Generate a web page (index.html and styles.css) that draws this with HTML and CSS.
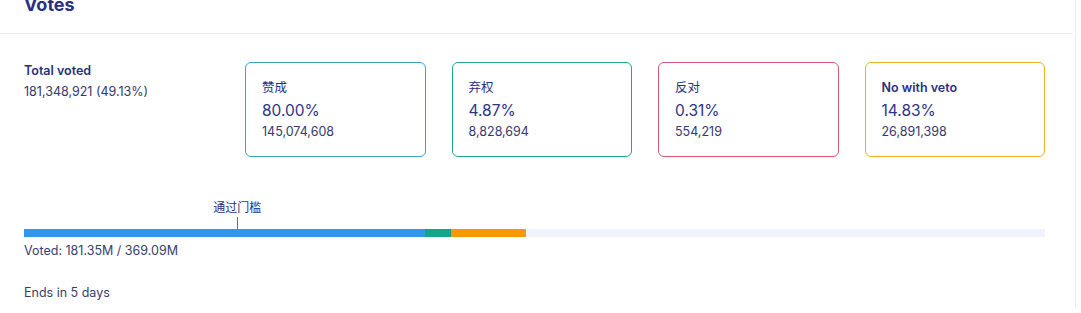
FILE: index.html
```html
<!DOCTYPE html>
<html lang="zh">
<head>
    <meta charset="UTF-8">
    <meta name="viewport" content="width=device-width, initial-scale=1.0">
    <title>Votes</title>
    <link rel="stylesheet" href="styles.css">
</head>
<body>
    <div class="page">
        <div class="panel">
            <div class="panel-header">
                <h2>Votes</h2>
            </div>

            <div class="panel-body">
                <div class="summary">
                    <div class="total">
                        <div class="total-label">Total voted</div>
                        <div class="total-value">181,348,921 (49.13%)</div>
                    </div>
                    <div class="options">
                        <div class="option yes">
                            <div class="option-name">赞成</div>
                            <div class="option-pct">80.00%</div>
                            <div class="option-amount">145,074,608</div>
                        </div>
                        <div class="option abstain">
                            <div class="option-name">弃权</div>
                            <div class="option-pct">4.87%</div>
                            <div class="option-amount">8,828,694</div>
                        </div>
                        <div class="option no">
                            <div class="option-name">反对</div>
                            <div class="option-pct">0.31%</div>
                            <div class="option-amount">554,219</div>
                        </div>
                        <div class="option veto">
                            <div class="option-name latin">No with veto</div>
                            <div class="option-pct">14.83%</div>
                            <div class="option-amount">26,891,398</div>
                        </div>
                    </div>
                </div>

                <div class="progress">
                    <div class="threshold" style="left: 20.9%;">
                        <span>通过门槛</span>
                        <i></i>
                    </div>
                    <div class="bar">
                        <div class="seg seg-yes" style="width: 39.3%;"></div>
                        <div class="seg seg-abstain" style="width: 2.55%;"></div>
                        <div class="seg seg-veto" style="width: 7.35%;"></div>
                    </div>
                </div>
                <div class="voted">Voted: 181.35M / 369.09M</div>
                <div class="ends">Ends in 5 days</div>
            </div>
        </div>
    </div>
</body>
</html>
```

FILE: styles.css
```css
body {
    margin: 0;
    padding: 0;
    background-color: #fff;
    font-family: Inter, "Noto Sans CJK SC", sans-serif;
    color: #2e3370;
    overflow: hidden;
}

.page {
    width: 1075px;
    height: 313px;
    border-right: 1px solid #eceef5;
}

.panel {
    width: 1073px;
}

.panel-header {
    height: 38px;
    margin-top: -5px;
    border-bottom: 1px solid #eceef3;
}

.panel-header h2 {
    margin: 0;
    padding-left: 24px;
    font-size: 18px;
    font-weight: 700;
    line-height: 20px;
    color: #2b2f85;
}

.panel-body {
    padding: 28px 28px 0 24px;
}

.summary {
    display: flex;
}

.total {
    width: 221px;
    padding-top: 1px;
}

.total-label {
    font-size: 12.5px;
    font-weight: 600;
    line-height: 16px;
    color: #2b2f80;
}

.total-value {
    font-size: 12.5px;
    line-height: 16px;
    margin-top: 5px;
    color: #34386e;
}

.options {
    flex: 1;
    display: flex;
    gap: 26px;
}

.option {
    flex: 1;
    height: 95px;
    box-sizing: border-box;
    border: 1px solid #ccc;
    border-radius: 6px;
    padding: 17px 16px 0 16px;
}

.option.yes { border-color: #3aa3c8; }
.option.abstain { border-color: #1ea58b; }
.option.no { border-color: #d85a6c; }
.option.veto { border-color: #e9b31f; }

.option-name {
    font-size: 12.5px;
    line-height: 16px;
    color: #2b2f85;
}

.option-name.latin {
    font-weight: 600;
}

.option-pct {
    font-size: 15.5px;
    line-height: 22px;
    margin-top: 4px;
    color: #2e3385;
}

.option-amount {
    font-size: 12.5px;
    line-height: 16px;
    margin-top: 2px;
    color: #34386e;
}

.progress {
    position: relative;
    margin-top: 43px;
    padding-top: 29px;
}

.threshold {
    position: absolute;
    top: 0;
    transform: translateX(-50%);
    display: flex;
    flex-direction: column;
    align-items: center;
}

.threshold span {
    font-size: 12px;
    line-height: 16px;
    color: #2b2f80;
}

.threshold i {
    display: block;
    width: 1px;
    height: 12px;
    margin-top: 1px;
    background-color: #6a6e90;
}

.bar {
    display: flex;
    height: 8px;
    background-color: #f1f2fb;
}

.seg-yes { background-color: #3296ec; }
.seg-abstain { background-color: #13a68a; }
.seg-veto { background-color: #f7980b; }

.voted {
    font-size: 12.5px;
    line-height: 16px;
    margin-top: 6px;
    color: #3a3e6e;
}

.ends {
    font-size: 12.5px;
    line-height: 16px;
    margin-top: 26px;
    color: #3a3e6e;
}
```
